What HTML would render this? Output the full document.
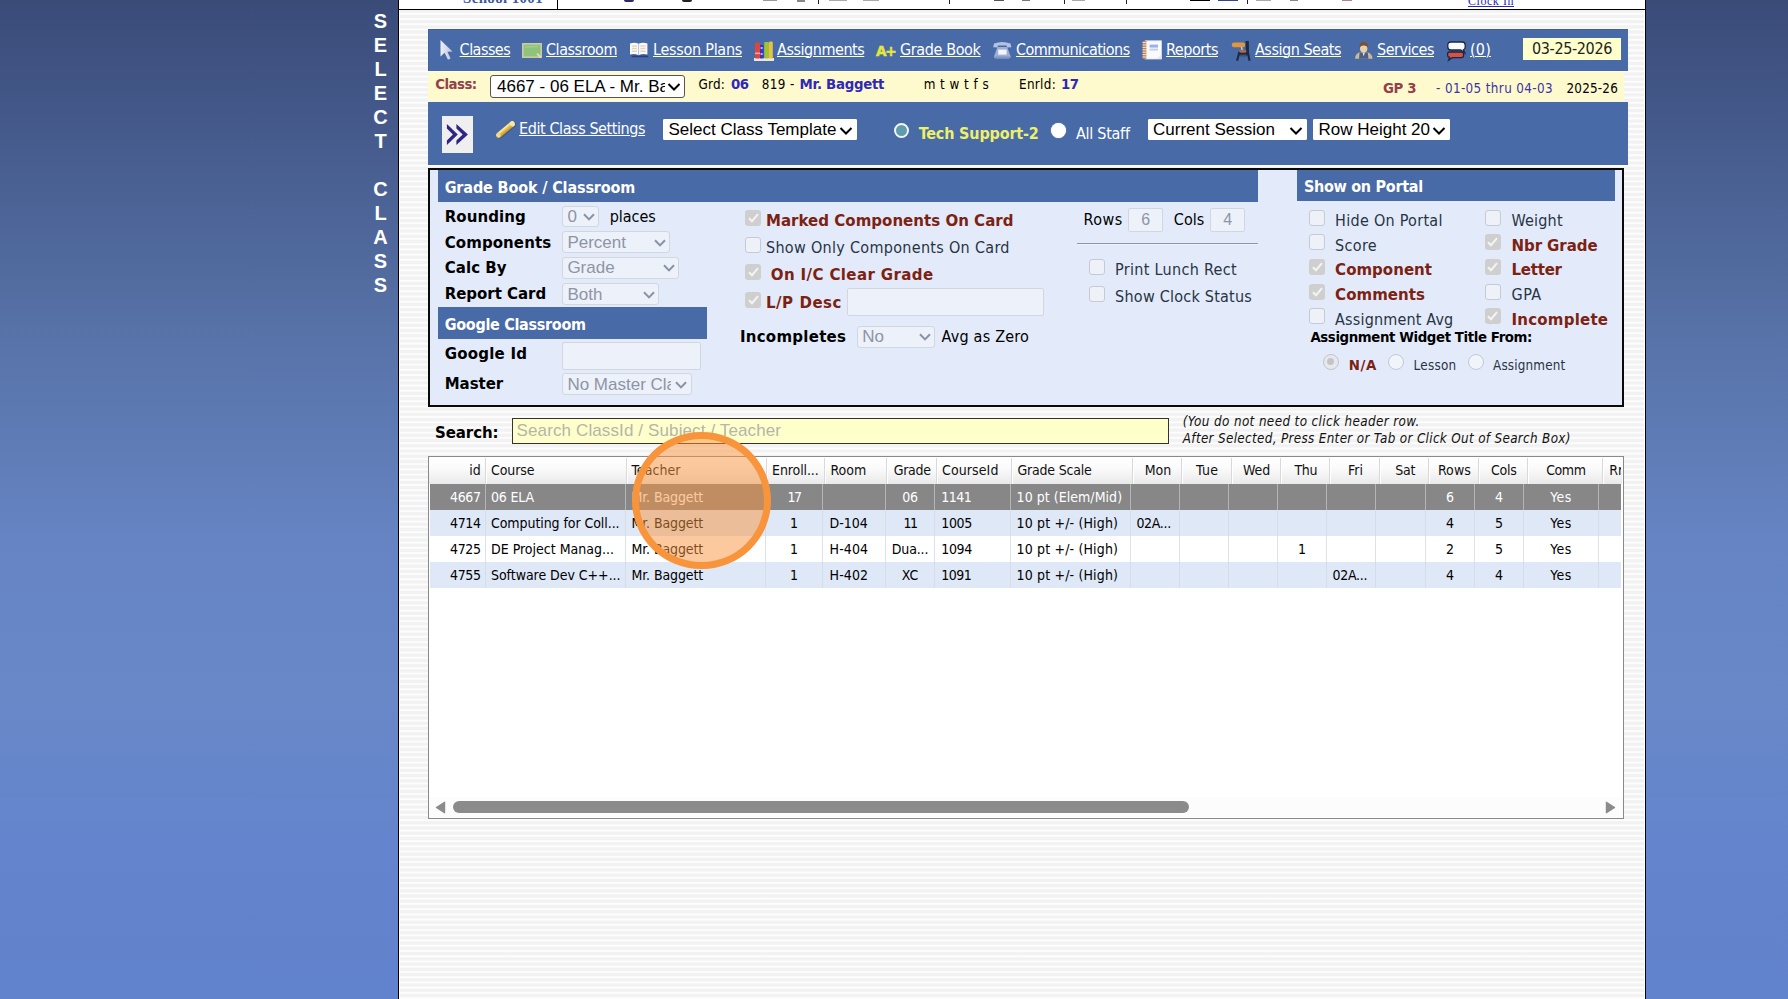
<!DOCTYPE html>
<html lang="en"><head><meta charset="utf-8"><title>Grade Book - Select Class</title>
<style>
html,body{margin:0;padding:0}
body{width:1788px;height:999px;overflow:hidden;position:relative;
 background:linear-gradient(180deg,#3a4b78 0px,#44598a 120px,#5772a7 330px,#6684c3 540px,#6888c8 700px,#6484cd 840px,#6182cc 999px);
 font-family:"DejaVu Sans Condensed","DejaVu Sans","Liberation Sans",sans-serif;font-size:16px;color:#000}
.a{position:absolute;box-sizing:border-box}
.t{position:absolute;white-space:nowrap;line-height:1}
.fc,.fcb{font-family:"DejaVu Sans Condensed","DejaVu Sans","Liberation Sans",sans-serif;font-stretch:condensed}
.fcb{font-weight:bold}
.fvb{font-family:"DejaVu Sans","Liberation Sans",sans-serif;font-weight:bold}
.fl,.flb{font-family:"Liberation Sans",sans-serif}
.flb{font-weight:bold}
.fs,.fsb{font-family:"Liberation Serif",serif}
.fsb{font-weight:bold}
svg{position:absolute;overflow:visible}
#main{left:398px;top:0;width:1248px;height:999px;border-left:1px solid #000;border-right:1px solid #02021a;box-shadow:inset 1px 0 0 #fff,inset -1px 0 0 #fff;
 background:repeating-linear-gradient(180deg,#f2f2f2 0px,#f2f2f2 1.8px,#fdfdfd 2.9px,#fdfdfd 3.7px,#f2f2f2 4.8px,#f2f2f2 5.236px)}
.sel{position:absolute;box-sizing:border-box;background:#fff;border:1px solid #767676;border-radius:3px}
.seld{position:absolute;box-sizing:border-box;background:#edf1f9;border:1px solid #d2d6df;border-radius:3px}
.cb{position:absolute;box-sizing:border-box;width:16px;height:16px;border:1px solid #c6cad4;border-radius:3px;background:#eff1f8}
.cbk{position:absolute;box-sizing:border-box;width:16px;height:16px;border-radius:3px;background:#cfcfcf}
.rd{position:absolute;box-sizing:border-box;width:16px;height:16px;border:1px solid #c4c8d2;border-radius:50%;background:#f1f4fb}
</style></head><body>
<div id="main" class="a"></div>
<div class="a" style="left:399px;top:0px;width:1246px;height:9px;background:#fff"></div>
<div class="a" style="left:399px;top:9px;width:1246px;height:1px;background:#000"></div>
<div class="a" style="left:557px;top:0px;width:1px;height:9px;background:#000"></div>
<span class="t fsb" style="top:-10px;line-height:16px;font-size:15px;color:#3c5a9a;letter-spacing:0.339px;left:463px;">School 1001</span>
<span class="t fs" style="top:-6px;line-height:14px;font-size:12px;color:#2a2ab0;letter-spacing:0.541px;text-decoration:underline;left:1468px;">Clock In</span>
<div class="a" style="left:818px;top:0px;width:1px;height:4px;background:#222"></div>
<div class="a" style="left:949px;top:0px;width:1px;height:4px;background:#222"></div>
<div class="a" style="left:1064px;top:0px;width:1px;height:4px;background:#222"></div>
<div class="a" style="left:1126px;top:0px;width:1px;height:4px;background:#222"></div>
<div class="a" style="left:1247px;top:0px;width:1px;height:4px;background:#222"></div>
<div class="a" style="left:624px;top:0px;width:10px;height:2px;background:#2b2b6b;border-radius:0 0 5px 5px"></div>
<div class="a" style="left:682px;top:0px;width:10px;height:2px;background:#222;border-radius:0 0 5px 5px"></div>
<div class="a" style="left:763px;top:0px;width:14px;height:1px;background:#999"></div>
<div class="a" style="left:797px;top:0px;width:8px;height:2px;background:#888"></div>
<div class="a" style="left:829px;top:0px;width:18px;height:1px;background:#aaa"></div>
<div class="a" style="left:863px;top:0px;width:16px;height:1px;background:#aaa"></div>
<div class="a" style="left:994px;top:0px;width:10px;height:1px;background:#555"></div>
<div class="a" style="left:1022px;top:0px;width:8px;height:1px;background:#777"></div>
<div class="a" style="left:1072px;top:0px;width:13px;height:1px;background:#aaa"></div>
<div class="a" style="left:1190px;top:0px;width:20px;height:1px;background:#000"></div>
<div class="a" style="left:1218px;top:0px;width:20px;height:1px;background:#334488"></div>
<div class="a" style="left:1256px;top:0px;width:15px;height:1px;background:#aaa"></div>
<div class="a" style="left:1290px;top:0px;width:8px;height:1px;background:#888"></div>
<div class="a" style="left:1342px;top:0px;width:10px;height:1px;background:#a88"></div>
<div class="a flb" style="left:370.5px;top:8.6px;width:20px;line-height:24px;font-size:20px;color:#fff;text-align:center;word-break:break-all">SELECT<br><br>CLASS</div>
<div class="a" style="left:428px;top:29px;width:1200px;height:42px;background:#486aa6;border-top:1px solid #44608f;border-left:1px solid #466499"></div>
<span class="t fc" style="top:39.8px;line-height:19px;font-size:16px;color:#fff;letter-spacing:-0.519px;text-decoration:underline;left:459.6px;text-decoration-thickness:1px;text-underline-offset:1px;">Classes</span>
<span class="t fc" style="top:39.8px;line-height:19px;font-size:16px;color:#fff;letter-spacing:-0.453px;text-decoration:underline;left:546px;text-decoration-thickness:1px;text-underline-offset:1px;">Classroom</span>
<span class="t fc" style="top:39.8px;line-height:19px;font-size:16px;color:#fff;letter-spacing:-0.268px;text-decoration:underline;left:653px;text-decoration-thickness:1px;text-underline-offset:1px;">Lesson Plans</span>
<span class="t fc" style="top:39.8px;line-height:19px;font-size:16px;color:#fff;letter-spacing:-0.451px;text-decoration:underline;left:777px;text-decoration-thickness:1px;text-underline-offset:1px;">Assignments</span>
<span class="t fc" style="top:39.8px;line-height:19px;font-size:16px;color:#fff;letter-spacing:-0.378px;text-decoration:underline;left:900px;text-decoration-thickness:1px;text-underline-offset:1px;">Grade Book</span>
<span class="t fc" style="top:39.8px;line-height:19px;font-size:16px;color:#fff;letter-spacing:-0.519px;text-decoration:underline;left:1016px;text-decoration-thickness:1px;text-underline-offset:1px;">Communications</span>
<span class="t fc" style="top:39.8px;line-height:19px;font-size:16px;color:#fff;letter-spacing:-0.449px;text-decoration:underline;left:1166px;text-decoration-thickness:1px;text-underline-offset:1px;">Reports</span>
<span class="t fc" style="top:39.8px;line-height:19px;font-size:16px;color:#fff;letter-spacing:-0.470px;text-decoration:underline;left:1255px;text-decoration-thickness:1px;text-underline-offset:1px;">Assign Seats</span>
<span class="t fc" style="top:39.8px;line-height:19px;font-size:16px;color:#fff;letter-spacing:-0.463px;text-decoration:underline;left:1377px;text-decoration-thickness:1px;text-underline-offset:1px;">Services</span>
<span class="t fc" style="top:39.8px;line-height:19px;font-size:16px;color:#fff;letter-spacing:0.203px;text-decoration:underline;left:1470px;text-decoration-thickness:1px;text-underline-offset:1px;">(0)</span>
<div class="a" style="left:1523px;top:38px;width:98px;height:22px;background:#ffffcc"></div>
<span class="t fc" style="top:39.3px;line-height:19px;font-size:16px;color:#222;letter-spacing:-0.364px;left:1532px;">03-25-2026</span>
<svg style="left:439px;top:39px" width="16" height="22" viewBox="0 0 16 22"><path d="M1.5 1 L1.5 17.5 L5.6 13.8 L9 20.8 L11.6 19.6 L8.4 12.8 L13.5 12.6 Z" fill="url(#cg)" opacity=".95"/><defs><linearGradient id="cg" x1="0" x2="1" y1="0" y2="0"><stop offset="0" stop-color="#f4f5fb"/><stop offset="1" stop-color="#c3cbe2"/></linearGradient></defs></svg>
<svg style="left:521.8px;top:42.8px" width="20" height="15" viewBox="0 0 20 15"><rect x=".8" y=".8" width="18.4" height="13.4" fill="#8fc37a" stroke="#d3cca6" stroke-width="1.5"/><path d="M15 10.6 L19 14.6" stroke="#e8dcc0" stroke-width="1.6"/><path d="M3 4 L16 3.4" stroke="#a0cf88" stroke-width="1.5"/></svg>
<svg style="left:629px;top:42px" width="20" height="16" viewBox="0 0 20 16"><path d="M2 13.4 L18.5 13.4 L19.5 15.2 L3.2 15.2 Z" fill="#2b3f78"/><path d="M1 1.6 Q5.5 0 9.6 1.8 Q13.8 0 18.4 1.6 L18.4 12.6 Q13.8 11.4 9.6 13.2 Q5.5 11.4 1 12.6 Z" fill="#fbfbfd"/><path d="M9.6 1.8 L9.6 13" stroke="#b9bfd2" stroke-width="1"/><path d="M2.8 4 H8 M2.8 6.6 H8 M2.8 9.2 H8 M11.3 4 H16.6 M11.3 6.6 H16.6 M11.3 9.2 H16.6" stroke="#e3d6bd" stroke-width="1.5"/></svg>
<svg style="left:753px;top:40px" width="22" height="22" viewBox="0 0 22 22"><rect x="1" y="18" width="20" height="3" fill="#e9e6dc"/><rect x="2" y="2.5" width="5" height="16" rx="1" fill="#d9473f"/><rect x="7" y="5" width="3.6" height="13.5" fill="#3a35c8"/><rect x="11.2" y="2" width="4.8" height="16.5" rx="1" fill="#9cc52f"/><rect x="16" y="1.5" width="3.8" height="17" rx="1" fill="#e6c04a"/><rect x="2" y="12.5" width="5" height="1.6" fill="#f0a8a0"/><rect x="7.6" y="7" width="2" height="2" fill="#b9b6ff"/><rect x="7.6" y="13" width="2" height="2" fill="#f0a0c0"/></svg>
<svg style="left:991.5px;top:40.8px" width="21" height="19" viewBox="0 0 21 19"><path d="M2 2.6 Q10 -0.4 18.5 2.6 L19.4 6.2 L15.2 6.6 L14.6 4.6 L6 4.6 L5.4 6.6 L1.2 6.2 Z" fill="#b4c2e2"/><path d="M5.4 6 L15.2 6 L18.6 15.6 Q18.8 17.6 16.8 17.6 L3.8 17.6 Q1.8 17.6 2 15.6 Z" fill="#9fb0d6"/><rect x="6.2" y="8.6" width="8.4" height="5" fill="#f4f6fc"/><path d="M2.4 16.2 H18.2" stroke="#8094c2" stroke-width="1.4"/></svg>
<svg style="left:1141.5px;top:40px" width="21" height="20" viewBox="0 0 21 20"><rect x="3.2" y=".8" width="16.2" height="18.2" fill="#fbfbfd" stroke="#dfe2ea" stroke-width=".8"/><rect x=".8" y="1" width="3.6" height="17.8" fill="#c9844e"/><path d="M.4 2.6 H5 M.4 5 H5 M.4 7.4 H5 M.4 9.8 H5 M.4 12.2 H5 M.4 14.6 H5 M.4 17 H5" stroke="#f1e4d4" stroke-width="1"/><rect x="7.6" y="4.6" width="8.4" height="3" fill="#9db2e4"/><rect x="7.6" y="8.6" width="8.4" height="2" fill="#c3cff0"/><path d="M15 19 L19.4 14.6 L19.4 19 Z" fill="#e4e6ee"/></svg>
<svg style="left:1230.5px;top:39.5px" width="21" height="22" viewBox="0 0 21 22"><path d="M14.6 1 L17.8 1 L18 12.4 L19.6 20.8 L17.4 20.8 L16.4 15.6 L8.6 15.6 L7.2 20.8 L5 20.8 L7.4 11.4 L14.8 11.4 Z" fill="#1d2a47"/><rect x=".8" y="2.6" width="13.4" height="4.6" rx="2.2" fill="#e2973c"/><path d="M10.4 7 L11.6 11.6" stroke="#cfd3dc" stroke-width="1.4"/><ellipse cx="11.8" cy="11.2" rx="3.6" ry="1.5" fill="#b86a3a"/><rect x="9.4" y="14.4" width="5.6" height="2.2" fill="#3c4f78"/></svg>
<svg style="left:1353.5px;top:40.5px" width="20" height="19" viewBox="0 0 20 19"><path d="M1 17.8 Q1.4 12.2 6 11.2 L13.4 11.2 Q18 12.2 18.6 17.8 Z" fill="#c9b995"/><path d="M5 17.8 L5.6 11.6 L13.8 11.6 L14.4 17.8 Z" fill="#4d5f86"/><path d="M8.6 11.6 L9.7 15.6 L10.8 11.6 Z" fill="#e8ecf4"/><ellipse cx="9.7" cy="7.6" rx="3.7" ry="3.9" fill="#ebcfa6"/><path d="M5.4 6.8 Q5 1.2 9.7 1 Q14.4 1.2 14 6.8 Q12.6 4.2 9.7 4.4 Q6.8 4.2 5.4 6.8 Z" fill="#7a5230"/></svg>
<svg style="left:1445.5px;top:39.5px" width="21" height="21" viewBox="0 0 21 21"><path d="M3.6 12 L15.4 12 Q17.6 12 17.6 14 L17.6 15.6 Q17.6 17.6 15.4 17.6 L6.4 17.6 L2.6 20.2 L3.6 17.4 Q1.6 17 1.6 15.4 L1.6 14 Q1.6 12 3.6 12 Z" fill="#d8523f" stroke="#1b2748" stroke-width="1.3"/><path d="M5 2 L16 2 Q19.2 2 19.2 5 L19.2 7 Q19.2 9.4 17.4 9.8 L18.8 12.8 L14.6 10 L5 10 Q1.8 10 1.8 7 L1.8 5 Q1.8 2 5 2 Z" fill="#fbfbfd" stroke="#1b2748" stroke-width="1.3"/></svg>
<span class="t fvb" style="top:43px;line-height:16px;font-size:13.6px;color:#e6e63c;letter-spacing:-1.261px;left:876px;-webkit-text-stroke:0.5px #e6e63c;">A+</span>
<div class="a" style="left:428px;top:71px;width:1196px;height:31px;background:#fffacd;border-top:1px solid #fbfbf0;border-bottom:1px solid #eef6ee"></div>
<span class="t fvb" style="top:77px;line-height:15px;font-size:13.33px;color:#93404c;letter-spacing:-0.508px;left:435.2px;">Class:</span>
<div class="sel" style="left:490px;top:75px;width:195px;height:23px;border-color:#555"></div>
<span class="t fl" style="top:77px;line-height:19px;font-size:17px;color:#000;left:497px;width:167.5px;overflow:hidden;">4667 - 06 ELA - Mr. Baggett</span>
<svg style="left:667px;top:82px" width="14" height="10" viewBox="0 0 14 10"><path d="M1.5 2 L7 7.5 L12.5 2" fill="none" stroke="#000" stroke-width="2"/></svg>
<span class="t fc" style="top:77px;line-height:15px;font-size:13.33px;color:#000;letter-spacing:0.211px;left:698.5px;">Grd:</span>
<span class="t fvb" style="top:77px;line-height:15px;font-size:13.33px;color:#3028b8;letter-spacing:-0.531px;left:731px;">06</span>
<span class="t fc" style="top:77px;line-height:15px;font-size:13.33px;color:#000;letter-spacing:0.394px;left:761.8px;">819 -</span>
<span class="t fvb" style="top:77px;line-height:15px;font-size:13.33px;color:#3028b8;letter-spacing:-0.287px;left:799.6px;">Mr. Baggett</span>
<span class="t fc" style="top:77px;line-height:15px;font-size:13.33px;color:#000;letter-spacing:0.464px;left:923.7px;">m t w t f s</span>
<span class="t fc" style="top:77px;line-height:15px;font-size:13.33px;color:#000;letter-spacing:0.318px;left:1019px;">Enrld:</span>
<span class="t fvb" style="top:77px;line-height:15px;font-size:13.33px;color:#3028b8;letter-spacing:-0.531px;left:1061px;">17</span>
<span class="t fvb" style="top:81px;line-height:15px;font-size:13.33px;color:#93404c;letter-spacing:-0.406px;left:1383px;">GP 3</span>
<span class="t fc" style="top:81px;line-height:15px;font-size:13.33px;color:#3a35a8;letter-spacing:0.375px;left:1436px;">- 01-05 thru 04-03</span>
<span class="t fc" style="top:81px;line-height:15px;font-size:13.33px;color:#000;letter-spacing:0.201px;left:1566.5px;">2025-26</span>
<div class="a" style="left:428px;top:102px;width:1200px;height:62.5px;background:#486aa6"></div>
<div class="a" style="left:442px;top:116px;width:31px;height:37px;background:#efefef"></div>
<svg style="left:442px;top:116px" width="31" height="37" viewBox="0 0 31 37"><path d="M4.9 8 L15.8 18.4 L4.9 29 L4.9 24.4 L10.9 18.4 L4.9 12.5 Z M14.4 8 L25.9 18.4 L14.4 29 L14.4 24.4 L20.7 18.4 L14.4 12.5 Z" fill="#2e2585"/></svg>
<svg style="left:493px;top:117px" width="26" height="26" viewBox="0 0 26 26"><defs><linearGradient id="pg" x1="0" x2="0" y1="0" y2="1"><stop offset="0" stop-color="#f6e08a"/><stop offset=".45" stop-color="#e9c652"/><stop offset="1" stop-color="#b98f34"/></linearGradient></defs><g transform="rotate(-40 12.3 12.5)"><rect x="1" y="9.9" width="22.8" height="5.6" rx="2.8" fill="#2c3860" opacity=".4" transform="translate(.4 1.1)"/><rect x="1" y="9.9" width="22.8" height="5.6" rx="2.8" fill="url(#pg)"/><rect x="19" y="9.9" width="4.8" height="5.6" rx="2.6" fill="#f4e6b0"/><ellipse cx="3.4" cy="12.7" rx="1.9" ry="2.2" fill="#f0d890"/><path d="M5 11 H18.6" stroke="#fbf0b8" stroke-width="1" opacity=".9"/></g></svg>
<span class="t fc" style="top:119px;line-height:19px;font-size:16px;color:#fff;letter-spacing:-0.418px;text-decoration:underline;left:519.1px;text-decoration-thickness:1px;text-underline-offset:1px;">Edit Class Settings</span>
<div class="sel" style="left:663px;top:119px;width:194.4px;height:21px;border-color:#fff;border-radius:1px"></div>
<span class="t fl" style="top:120.3px;line-height:19px;font-size:17px;color:#000;left:668.5px;">Select Class Template</span>
<svg style="left:839px;top:126px" width="14" height="10" viewBox="0 0 14 10"><path d="M1.5 2 L7 7.5 L12.5 2" fill="none" stroke="#000" stroke-width="2"/></svg>
<div class="a" style="left:893.5px;top:123px;width:15px;height:15px;border-radius:50%;border:2.2px solid #f2f6f8;background:#5f9dac"></div>
<span class="t fcb" style="top:123.6px;line-height:19px;font-size:16px;color:#eef06a;letter-spacing:-0.167px;left:918.7px;">Tech Support-2</span>
<div class="a" style="left:1050.5px;top:122.5px;width:15px;height:15px;border-radius:50%;background:#fff;box-shadow:0 0 1px #dde"></div>
<span class="t fc" style="top:123.6px;line-height:19px;font-size:16px;color:#fff;letter-spacing:-0.271px;left:1076px;">All Staff</span>
<div class="sel" style="left:1148px;top:119px;width:159.4px;height:21px;border-color:#fff;border-radius:1px"></div>
<span class="t fl" style="top:120.3px;line-height:19px;font-size:17px;color:#000;left:1153px;">Current Session</span>
<svg style="left:1289px;top:126px" width="14" height="10" viewBox="0 0 14 10"><path d="M1.5 2 L7 7.5 L12.5 2" fill="none" stroke="#000" stroke-width="2"/></svg>
<div class="sel" style="left:1313.4px;top:119px;width:137px;height:21px;border-color:#fff;border-radius:1px"></div>
<span class="t fl" style="top:120.3px;line-height:19px;font-size:17px;color:#000;left:1318.5px;">Row Height 20</span>
<svg style="left:1432px;top:126px" width="14" height="10" viewBox="0 0 14 10"><path d="M1.5 2 L7 7.5 L12.5 2" fill="none" stroke="#000" stroke-width="2"/></svg>
<div class="a" style="left:428px;top:168px;width:1196px;height:239px;background:#e3ebfa;border:2px solid #0a0a0a"></div>
<div class="a" style="left:438px;top:170px;width:820px;height:32px;background:#486aa6"></div>
<span class="t fcb" style="top:178.4px;line-height:19px;font-size:16px;color:#fff;letter-spacing:-0.138px;left:444.7px;">Grade Book / Classroom</span>
<div class="a" style="left:1297px;top:170px;width:318px;height:31px;background:#486aa6"></div>
<span class="t fcb" style="top:177.4px;line-height:19px;font-size:16px;color:#fff;letter-spacing:-0.288px;left:1303.9px;">Show on Portal</span>
<div class="a" style="left:438px;top:307px;width:269px;height:32px;background:#486aa6"></div>
<span class="t fcb" style="top:314.8px;line-height:19px;font-size:16px;color:#fff;letter-spacing:-0.302px;left:444.7px;">Google Classroom</span>
<span class="t fvb" style="top:207.8px;line-height:18px;font-size:15px;color:#000;letter-spacing:0.061px;left:444.7px;">Rounding</span>
<div class="seld" style="left:562.4px;top:205.6px;width:36.6px;height:21.6px"></div>
<span class="t fl" style="top:207.2px;line-height:19px;font-size:17px;color:#8d95a6;left:567.4px;">0</span>
<svg style="left:582.7px;top:213.2px" width="12" height="8" viewBox="0 0 12 8"><path d="M1 1.2 L6 6.4 L11 1.2" fill="none" stroke="#8a93a6" stroke-width="2"/></svg>
<span class="t fc" style="top:206.8px;line-height:19px;font-size:16px;color:#000;letter-spacing:-0.039px;left:609.7px;">places</span>
<span class="t fvb" style="top:234px;line-height:18px;font-size:15px;color:#000;letter-spacing:0.087px;left:444.7px;">Components</span>
<div class="seld" style="left:562.4px;top:231.4px;width:107.4px;height:22px"></div>
<span class="t fl" style="top:233px;line-height:19px;font-size:17px;color:#8d95a6;left:567.4px;">Percent</span>
<svg style="left:653.5px;top:239.0px" width="12" height="8" viewBox="0 0 12 8"><path d="M1 1.2 L6 6.4 L11 1.2" fill="none" stroke="#8a93a6" stroke-width="2"/></svg>
<span class="t fvb" style="top:258.7px;line-height:18px;font-size:15px;color:#000;letter-spacing:0.056px;left:444.7px;">Calc By</span>
<div class="seld" style="left:562.4px;top:256.7px;width:116.6px;height:22px"></div>
<span class="t fl" style="top:258.3px;line-height:19px;font-size:17px;color:#8d95a6;left:567.4px;">Grade</span>
<svg style="left:662.7px;top:264.3px" width="12" height="8" viewBox="0 0 12 8"><path d="M1 1.2 L6 6.4 L11 1.2" fill="none" stroke="#8a93a6" stroke-width="2"/></svg>
<span class="t fvb" style="top:284.9px;line-height:18px;font-size:15px;color:#000;letter-spacing:-0.030px;left:444.7px;">Report Card</span>
<div class="seld" style="left:562.4px;top:283px;width:96.6px;height:22px"></div>
<span class="t fl" style="top:284.6px;line-height:19px;font-size:17px;color:#8d95a6;left:567.4px;">Both</span>
<svg style="left:642.7px;top:290.6px" width="12" height="8" viewBox="0 0 12 8"><path d="M1 1.2 L6 6.4 L11 1.2" fill="none" stroke="#8a93a6" stroke-width="2"/></svg>
<span class="t fvb" style="top:344.5px;line-height:18px;font-size:15px;color:#000;letter-spacing:0.220px;left:444.7px;">Google Id</span>
<div class="seld" style="left:562.4px;top:342.4px;width:138.4px;height:27.4px;border-radius:2px"></div>
<span class="t fvb" style="top:375px;line-height:18px;font-size:15px;color:#000;letter-spacing:-0.036px;left:444.7px;">Master</span>
<div class="seld" style="left:562.4px;top:373px;width:129.2px;height:22px"></div>
<span class="t fl" style="top:374.6px;line-height:19px;font-size:17px;color:#8d95a6;left:567.4px;width:104px;overflow:hidden;">No Master Class</span>
<svg style="left:675.3px;top:380.6px" width="12" height="8" viewBox="0 0 12 8"><path d="M1 1.2 L6 6.4 L11 1.2" fill="none" stroke="#8a93a6" stroke-width="2"/></svg>
<div class="cbk" style="left:745.3px;top:210px"><svg style="left:2.5px;top:3px" width="11" height="10" viewBox="0 0 11 10"><path d="M1 5.2 L4 8.2 L10 1.2" fill="none" stroke="#f4f4f4" stroke-width="2"/></svg></div>
<span class="t fvb" style="top:212.2px;line-height:18px;font-size:15px;color:#7c2212;letter-spacing:0.023px;left:766px;">Marked Components On Card</span>
<div class="cb" style="left:745.3px;top:237px"></div>
<span class="t fc" style="top:238px;line-height:19px;font-size:16px;color:#283444;letter-spacing:0.304px;left:766px;">Show Only Components On Card</span>
<div class="cbk" style="left:745.3px;top:264.3px"><svg style="left:2.5px;top:3px" width="11" height="10" viewBox="0 0 11 10"><path d="M1 5.2 L4 8.2 L10 1.2" fill="none" stroke="#f4f4f4" stroke-width="2"/></svg></div>
<span class="t fvb" style="top:266px;line-height:18px;font-size:15px;color:#7c2212;letter-spacing:0.386px;left:770.8px;">On I/C Clear Grade</span>
<div class="cbk" style="left:745.3px;top:292px"><svg style="left:2.5px;top:3px" width="11" height="10" viewBox="0 0 11 10"><path d="M1 5.2 L4 8.2 L10 1.2" fill="none" stroke="#f4f4f4" stroke-width="2"/></svg></div>
<span class="t fvb" style="top:294px;line-height:18px;font-size:15px;color:#7c2212;letter-spacing:0.537px;left:766px;">L/P Desc</span>
<div class="seld" style="left:847px;top:288.3px;width:197px;height:27.3px;border-radius:2px"></div>
<span class="t fvb" style="top:327.8px;line-height:18px;font-size:15px;color:#000;letter-spacing:0.262px;left:739.9px;">Incompletes</span>
<div class="seld" style="left:857.3px;top:325.8px;width:78.2px;height:22px"></div>
<span class="t fl" style="top:327.4px;line-height:19px;font-size:17px;color:#8d95a6;left:862.3px;">No</span>
<svg style="left:919.2px;top:333.40000000000003px" width="12" height="8" viewBox="0 0 12 8"><path d="M1 1.2 L6 6.4 L11 1.2" fill="none" stroke="#8a93a6" stroke-width="2"/></svg>
<span class="t fc" style="top:326.8px;line-height:19px;font-size:16px;color:#000;letter-spacing:0.217px;left:941.6px;">Avg as Zero</span>
<span class="t fc" style="top:209.9px;line-height:19px;font-size:16px;color:#000;letter-spacing:0.510px;left:1083.4px;">Rows</span>
<div class="seld" style="left:1128.4px;top:208.4px;width:34.6px;height:23.2px;border-radius:2px"></div>
<span class="t fl" style="top:211.3px;line-height:17px;font-size:16px;color:#8d95a6;left:845.7px;width:600px;text-align:center;">6</span>
<span class="t fc" style="top:209.9px;line-height:19px;font-size:16px;color:#000;letter-spacing:0.060px;left:1173.8px;">Cols</span>
<div class="seld" style="left:1210.2px;top:208.4px;width:34.8px;height:23.2px;border-radius:2px"></div>
<span class="t fl" style="top:211.3px;line-height:17px;font-size:16px;color:#8d95a6;left:927.6px;width:600px;text-align:center;">4</span>
<div class="a" style="left:1077px;top:243px;width:181px;height:2px;border-top:1px solid #92969e;border-bottom:1px solid #eef2fb"></div>
<div class="cb" style="left:1089.2px;top:259px"></div>
<span class="t fc" style="top:260.1px;line-height:19px;font-size:16px;color:#283444;letter-spacing:0.304px;left:1115.1px;">Print Lunch Rect</span>
<div class="cb" style="left:1089.2px;top:286px"></div>
<span class="t fc" style="top:287px;line-height:19px;font-size:16px;color:#283444;letter-spacing:0.237px;left:1115.1px;">Show Clock Status</span>
<div class="cb" style="left:1309.1px;top:209.7px"></div>
<span class="t fc" style="top:211.2px;line-height:19px;font-size:16px;color:#283444;letter-spacing:0.277px;left:1335.1px;">Hide On Portal</span>
<div class="cb" style="left:1309.1px;top:234.3px"></div>
<span class="t fc" style="top:235.8px;line-height:19px;font-size:16px;color:#283444;letter-spacing:0.324px;left:1335.1px;">Score</span>
<div class="cbk" style="left:1309.1px;top:258.6px"><svg style="left:2.5px;top:3px" width="11" height="10" viewBox="0 0 11 10"><path d="M1 5.2 L4 8.2 L10 1.2" fill="none" stroke="#f4f4f4" stroke-width="2"/></svg></div>
<span class="t fvb" style="top:261.1px;line-height:18px;font-size:15px;color:#7c2212;letter-spacing:0.024px;left:1335.1px;">Component</span>
<div class="cbk" style="left:1309.1px;top:283.6px"><svg style="left:2.5px;top:3px" width="11" height="10" viewBox="0 0 11 10"><path d="M1 5.2 L4 8.2 L10 1.2" fill="none" stroke="#f4f4f4" stroke-width="2"/></svg></div>
<span class="t fvb" style="top:286.1px;line-height:18px;font-size:15px;color:#7c2212;letter-spacing:0.034px;left:1335.1px;">Comments</span>
<div class="cb" style="left:1309.1px;top:308.3px"></div>
<span class="t fc" style="top:309.8px;line-height:19px;font-size:16px;color:#283444;letter-spacing:0.172px;left:1335.1px;">Assignment Avg</span>
<div class="cb" style="left:1484.9px;top:209.7px"></div>
<span class="t fc" style="top:211.2px;line-height:19px;font-size:16px;color:#283444;letter-spacing:0.206px;left:1511.5px;">Weight</span>
<div class="cbk" style="left:1484.9px;top:234.3px"><svg style="left:2.5px;top:3px" width="11" height="10" viewBox="0 0 11 10"><path d="M1 5.2 L4 8.2 L10 1.2" fill="none" stroke="#f4f4f4" stroke-width="2"/></svg></div>
<span class="t fvb" style="top:236.8px;line-height:18px;font-size:15px;color:#7c2212;letter-spacing:-0.073px;left:1511.5px;">Nbr Grade</span>
<div class="cbk" style="left:1484.9px;top:258.6px"><svg style="left:2.5px;top:3px" width="11" height="10" viewBox="0 0 11 10"><path d="M1 5.2 L4 8.2 L10 1.2" fill="none" stroke="#f4f4f4" stroke-width="2"/></svg></div>
<span class="t fvb" style="top:261.1px;line-height:18px;font-size:15px;color:#7c2212;letter-spacing:-0.226px;left:1511.5px;">Letter</span>
<div class="cb" style="left:1484.9px;top:283.6px"></div>
<span class="t fc" style="top:285.1px;line-height:19px;font-size:16px;color:#283444;letter-spacing:0.515px;left:1511.5px;">GPA</span>
<div class="cbk" style="left:1484.9px;top:308.3px"><svg style="left:2.5px;top:3px" width="11" height="10" viewBox="0 0 11 10"><path d="M1 5.2 L4 8.2 L10 1.2" fill="none" stroke="#f4f4f4" stroke-width="2"/></svg></div>
<span class="t fvb" style="top:310.8px;line-height:18px;font-size:15px;color:#7c2212;letter-spacing:0.222px;left:1511.5px;">Incomplete</span>
<span class="t fvb" style="top:329.6px;line-height:15px;font-size:13.33px;color:#000;letter-spacing:-0.396px;left:1310.4px;">Assignment Widget Title From:</span>
<div class="rd" style="left:1322.8px;top:353.8px;background:#e6e8ee;border-color:#c2c4ca"><div class="a" style="left:3.5px;top:3.5px;width:7px;height:7px;border-radius:50%;background:#c4c4c8"></div></div>
<span class="t fvb" style="top:357.5px;line-height:15px;font-size:13.33px;color:#7c2212;letter-spacing:0.652px;left:1348.7px;">N/A</span>
<div class="rd" style="left:1388px;top:353.8px"></div>
<span class="t fc" style="top:357.5px;line-height:15px;font-size:13.33px;color:#283444;letter-spacing:0.256px;left:1413.6px;">Lesson</span>
<div class="rd" style="left:1467.8px;top:353.8px"></div>
<span class="t fc" style="top:357.5px;line-height:15px;font-size:13.33px;color:#283444;letter-spacing:0.179px;left:1493px;">Assignment</span>
<span class="t fvb" style="top:423.5px;line-height:18px;font-size:15px;color:#000;letter-spacing:-0.083px;left:435px;">Search:</span>
<div class="a" style="left:512px;top:418px;width:657px;height:26px;background:#ffffcc;border:1px solid #333"></div>
<span class="t fl" style="top:420.8px;line-height:19px;font-size:17px;color:#b5b5a8;letter-spacing:0.118px;left:516.6px;">Search ClassId / Subject / Teacher</span>
<span class="t fc" style="top:413.6px;line-height:15px;font-size:13.33px;color:#111;letter-spacing:0.384px;left:1182.8px;font-style:italic;">(You do not need to click header row.</span>
<span class="t fc" style="top:430.6px;line-height:15px;font-size:13.33px;color:#111;letter-spacing:0.332px;left:1182.8px;font-style:italic;">After Selected, Press Enter or Tab or Click Out of Search Box)</span>
<div class="a" style="left:428px;top:456px;width:1196px;height:363px;background:#fff;border:1px solid #8a8a8a"></div>
<div class="a" style="left:429px;top:457px;width:1193px;height:27px;background:linear-gradient(180deg,#ffffff 0%,#fbfbfb 40%,#f1f1f1 75%,#e9e9e9 100%)"></div>
<div class="a" style="left:430px;top:484px;width:1191px;height:26px;background:#878787"></div>
<div class="a" style="left:430px;top:510px;width:1191px;height:26px;background:#dfe8f7"></div>
<div class="a" style="left:430px;top:536px;width:1191px;height:26px;background:#ffffff"></div>
<div class="a" style="left:430px;top:562px;width:1191px;height:26px;background:#dfe8f7"></div>
<div class="a" style="left:485px;top:458px;width:1px;height:26px;background:#d9d9d9"></div>
<div class="a" style="left:486px;top:458px;width:1px;height:26px;background:#fff"></div>
<div class="a" style="left:626px;top:458px;width:1px;height:26px;background:#d9d9d9"></div>
<div class="a" style="left:627px;top:458px;width:1px;height:26px;background:#fff"></div>
<div class="a" style="left:766px;top:458px;width:1px;height:26px;background:#d9d9d9"></div>
<div class="a" style="left:767px;top:458px;width:1px;height:26px;background:#fff"></div>
<div class="a" style="left:824px;top:458px;width:1px;height:26px;background:#d9d9d9"></div>
<div class="a" style="left:825px;top:458px;width:1px;height:26px;background:#fff"></div>
<div class="a" style="left:886px;top:458px;width:1px;height:26px;background:#d9d9d9"></div>
<div class="a" style="left:887px;top:458px;width:1px;height:26px;background:#fff"></div>
<div class="a" style="left:936px;top:458px;width:1px;height:26px;background:#d9d9d9"></div>
<div class="a" style="left:937px;top:458px;width:1px;height:26px;background:#fff"></div>
<div class="a" style="left:1011px;top:458px;width:1px;height:26px;background:#d9d9d9"></div>
<div class="a" style="left:1012px;top:458px;width:1px;height:26px;background:#fff"></div>
<div class="a" style="left:1132px;top:458px;width:1px;height:26px;background:#d9d9d9"></div>
<div class="a" style="left:1133px;top:458px;width:1px;height:26px;background:#fff"></div>
<div class="a" style="left:1181px;top:458px;width:1px;height:26px;background:#d9d9d9"></div>
<div class="a" style="left:1182px;top:458px;width:1px;height:26px;background:#fff"></div>
<div class="a" style="left:1231px;top:458px;width:1px;height:26px;background:#d9d9d9"></div>
<div class="a" style="left:1232px;top:458px;width:1px;height:26px;background:#fff"></div>
<div class="a" style="left:1280px;top:458px;width:1px;height:26px;background:#d9d9d9"></div>
<div class="a" style="left:1281px;top:458px;width:1px;height:26px;background:#fff"></div>
<div class="a" style="left:1329px;top:458px;width:1px;height:26px;background:#d9d9d9"></div>
<div class="a" style="left:1330px;top:458px;width:1px;height:26px;background:#fff"></div>
<div class="a" style="left:1379px;top:458px;width:1px;height:26px;background:#d9d9d9"></div>
<div class="a" style="left:1380px;top:458px;width:1px;height:26px;background:#fff"></div>
<div class="a" style="left:1428px;top:458px;width:1px;height:26px;background:#d9d9d9"></div>
<div class="a" style="left:1429px;top:458px;width:1px;height:26px;background:#fff"></div>
<div class="a" style="left:1478px;top:458px;width:1px;height:26px;background:#d9d9d9"></div>
<div class="a" style="left:1479px;top:458px;width:1px;height:26px;background:#fff"></div>
<div class="a" style="left:1527px;top:458px;width:1px;height:26px;background:#d9d9d9"></div>
<div class="a" style="left:1528px;top:458px;width:1px;height:26px;background:#fff"></div>
<div class="a" style="left:1602px;top:458px;width:1px;height:26px;background:#d9d9d9"></div>
<div class="a" style="left:1603px;top:458px;width:1px;height:26px;background:#fff"></div>
<div class="a" style="left:485px;top:484px;width:1px;height:26px;background:#b4b4b4"></div>
<div class="a" style="left:485px;top:510px;width:1px;height:78px;background:#d4d9e2;opacity:.8"></div>
<div class="a" style="left:625px;top:484px;width:1px;height:26px;background:#b4b4b4"></div>
<div class="a" style="left:625px;top:510px;width:1px;height:78px;background:#d4d9e2;opacity:.8"></div>
<div class="a" style="left:765px;top:484px;width:1px;height:26px;background:#b4b4b4"></div>
<div class="a" style="left:765px;top:510px;width:1px;height:78px;background:#d4d9e2;opacity:.8"></div>
<div class="a" style="left:822px;top:484px;width:1px;height:26px;background:#b4b4b4"></div>
<div class="a" style="left:822px;top:510px;width:1px;height:78px;background:#d4d9e2;opacity:.8"></div>
<div class="a" style="left:885px;top:484px;width:1px;height:26px;background:#b4b4b4"></div>
<div class="a" style="left:885px;top:510px;width:1px;height:78px;background:#d4d9e2;opacity:.8"></div>
<div class="a" style="left:934px;top:484px;width:1px;height:26px;background:#b4b4b4"></div>
<div class="a" style="left:934px;top:510px;width:1px;height:78px;background:#d4d9e2;opacity:.8"></div>
<div class="a" style="left:1010px;top:484px;width:1px;height:26px;background:#b4b4b4"></div>
<div class="a" style="left:1010px;top:510px;width:1px;height:78px;background:#d4d9e2;opacity:.8"></div>
<div class="a" style="left:1130px;top:484px;width:1px;height:26px;background:#b4b4b4"></div>
<div class="a" style="left:1130px;top:510px;width:1px;height:78px;background:#d4d9e2;opacity:.8"></div>
<div class="a" style="left:1179px;top:484px;width:1px;height:26px;background:#b4b4b4"></div>
<div class="a" style="left:1179px;top:510px;width:1px;height:78px;background:#d4d9e2;opacity:.8"></div>
<div class="a" style="left:1228px;top:484px;width:1px;height:26px;background:#b4b4b4"></div>
<div class="a" style="left:1228px;top:510px;width:1px;height:78px;background:#d4d9e2;opacity:.8"></div>
<div class="a" style="left:1277px;top:484px;width:1px;height:26px;background:#b4b4b4"></div>
<div class="a" style="left:1277px;top:510px;width:1px;height:78px;background:#d4d9e2;opacity:.8"></div>
<div class="a" style="left:1326px;top:484px;width:1px;height:26px;background:#b4b4b4"></div>
<div class="a" style="left:1326px;top:510px;width:1px;height:78px;background:#d4d9e2;opacity:.8"></div>
<div class="a" style="left:1375px;top:484px;width:1px;height:26px;background:#b4b4b4"></div>
<div class="a" style="left:1375px;top:510px;width:1px;height:78px;background:#d4d9e2;opacity:.8"></div>
<div class="a" style="left:1425px;top:484px;width:1px;height:26px;background:#b4b4b4"></div>
<div class="a" style="left:1425px;top:510px;width:1px;height:78px;background:#d4d9e2;opacity:.8"></div>
<div class="a" style="left:1474px;top:484px;width:1px;height:26px;background:#b4b4b4"></div>
<div class="a" style="left:1474px;top:510px;width:1px;height:78px;background:#d4d9e2;opacity:.8"></div>
<div class="a" style="left:1523px;top:484px;width:1px;height:26px;background:#b4b4b4"></div>
<div class="a" style="left:1523px;top:510px;width:1px;height:78px;background:#d4d9e2;opacity:.8"></div>
<div class="a" style="left:1598px;top:484px;width:1px;height:26px;background:#b4b4b4"></div>
<div class="a" style="left:1598px;top:510px;width:1px;height:78px;background:#d4d9e2;opacity:.8"></div>
<span class="t fc" style="top:462px;line-height:16px;font-size:14px;color:#111;left:-119.3px;width:600px;text-align:right;">id</span>
<span class="t fc" style="top:462px;line-height:16px;font-size:14px;color:#111;letter-spacing:-0.081px;left:491px;">Course</span>
<span class="t fc" style="top:462px;line-height:16px;font-size:14px;color:#111;letter-spacing:0.054px;left:631.5px;">Teacher</span>
<span class="t fc" style="top:462px;line-height:16px;font-size:14px;color:#111;letter-spacing:-0.113px;left:772.1px;">Enroll...</span>
<span class="t fc" style="top:462px;line-height:16px;font-size:14px;color:#111;letter-spacing:0.047px;left:830.4px;">Room</span>
<span class="t fc" style="top:462px;line-height:16px;font-size:14px;color:#111;letter-spacing:0.102px;left:942px;">CourseId</span>
<span class="t fc" style="top:462px;line-height:16px;font-size:14px;color:#111;letter-spacing:-0.209px;left:1017.5px;">Grade Scale</span>
<span class="t fc" style="top:462px;line-height:16px;font-size:14px;color:#111;letter-spacing:-0.281px;left:612.2px;width:600px;text-align:center;">Grade</span>
<span class="t fc" style="top:462px;line-height:16px;font-size:14px;color:#111;letter-spacing:0.013px;left:857.95px;width:600px;text-align:center;">Mon</span>
<span class="t fc" style="top:462px;line-height:16px;font-size:14px;color:#111;letter-spacing:0.263px;left:907.15px;width:600px;text-align:center;">Tue</span>
<span class="t fc" style="top:462px;line-height:16px;font-size:14px;color:#111;letter-spacing:-0.030px;left:956.65px;width:600px;text-align:center;">Wed</span>
<span class="t fc" style="top:462px;line-height:16px;font-size:14px;color:#111;letter-spacing:-0.224px;left:1005.9px;width:600px;text-align:center;">Thu</span>
<span class="t fc" style="top:462px;line-height:16px;font-size:14px;color:#111;letter-spacing:0.031px;left:1055.55px;width:600px;text-align:center;">Fri</span>
<span class="t fc" style="top:462px;line-height:16px;font-size:14px;color:#111;letter-spacing:-0.219px;left:1105.2px;width:600px;text-align:center;">Sat</span>
<span class="t fc" style="top:462px;line-height:16px;font-size:14px;color:#111;letter-spacing:0.099px;left:1154.45px;width:600px;text-align:center;">Rows</span>
<span class="t fc" style="top:462px;line-height:16px;font-size:14px;color:#111;letter-spacing:-0.245px;left:1203.8px;width:600px;text-align:center;">Cols</span>
<span class="t fc" style="top:462px;line-height:16px;font-size:14px;color:#111;letter-spacing:-0.387px;left:1265.9px;width:600px;text-align:center;">Comm</span>
<span class="t fc" style="top:462px;line-height:16px;font-size:14px;color:#111;left:1609.3px;width:11.5px;overflow:hidden;">Rr</span>
<span class="t fc" style="top:489.4px;line-height:16px;font-size:14px;color:#fff;letter-spacing:-0.337px;left:-119.3px;width:600px;text-align:right;">4667</span>
<span class="t fc" style="top:489.4px;line-height:16px;font-size:14px;color:#fff;letter-spacing:-0.156px;left:491px;">06 ELA</span>
<span class="t fc" style="top:489.4px;line-height:16px;font-size:14px;color:#fff;letter-spacing:-0.094px;left:631.5px;">Mr. Baggett</span>
<span class="t fc" style="top:489.4px;line-height:16px;font-size:14px;color:#fff;letter-spacing:-1.516px;left:494px;width:600px;text-align:center;">17</span>
<span class="t fc" style="top:489.4px;line-height:16px;font-size:14px;color:#fff;letter-spacing:-0.366px;left:610px;width:600px;text-align:center;">06</span>
<span class="t fc" style="top:489.4px;line-height:16px;font-size:14px;color:#fff;letter-spacing:-0.512px;left:941.3px;">1141</span>
<span class="t fc" style="top:489.4px;line-height:16px;font-size:14px;color:#fff;letter-spacing:0.038px;left:1016.6px;">10 pt (Elem/Mid)</span>
<span class="t fc" style="top:489.4px;line-height:16px;font-size:14px;color:#fff;left:1150px;width:600px;text-align:center;">6</span>
<span class="t fc" style="top:489.4px;line-height:16px;font-size:14px;color:#fff;left:1199px;width:600px;text-align:center;">4</span>
<span class="t fc" style="top:489.4px;line-height:16px;font-size:14px;color:#fff;letter-spacing:0.448px;left:1261px;width:600px;text-align:center;">Yes</span>
<span class="t fc" style="top:515.4px;line-height:16px;font-size:14px;color:#000;letter-spacing:-0.337px;left:-119.3px;width:600px;text-align:right;">4714</span>
<span class="t fc" style="top:515.4px;line-height:16px;font-size:14px;color:#000;letter-spacing:-0.071px;left:491px;">Computing for Coll...</span>
<span class="t fc" style="top:515.4px;line-height:16px;font-size:14px;color:#000;letter-spacing:-0.094px;left:631.5px;">Mr. Baggett</span>
<span class="t fc" style="top:515.4px;line-height:16px;font-size:14px;color:#000;left:494px;width:600px;text-align:center;">1</span>
<span class="t fc" style="top:515.4px;line-height:16px;font-size:14px;color:#000;letter-spacing:-0.056px;left:829.6px;">D-104</span>
<span class="t fc" style="top:515.4px;line-height:16px;font-size:14px;color:#000;letter-spacing:-1.516px;left:610px;width:600px;text-align:center;">11</span>
<span class="t fc" style="top:515.4px;line-height:16px;font-size:14px;color:#000;letter-spacing:-0.387px;left:941.3px;">1005</span>
<span class="t fc" style="top:515.4px;line-height:16px;font-size:14px;color:#000;letter-spacing:0.150px;left:1016.6px;">10 pt +/- (High)</span>
<span class="t fc" style="top:515.4px;line-height:16px;font-size:14px;color:#000;letter-spacing:-0.315px;left:1136.4px;">02A...</span>
<span class="t fc" style="top:515.4px;line-height:16px;font-size:14px;color:#000;left:1150px;width:600px;text-align:center;">4</span>
<span class="t fc" style="top:515.4px;line-height:16px;font-size:14px;color:#000;left:1199px;width:600px;text-align:center;">5</span>
<span class="t fc" style="top:515.4px;line-height:16px;font-size:14px;color:#000;letter-spacing:0.448px;left:1261px;width:600px;text-align:center;">Yes</span>
<span class="t fc" style="top:541.4px;line-height:16px;font-size:14px;color:#000;letter-spacing:-0.337px;left:-119.3px;width:600px;text-align:right;">4725</span>
<span class="t fc" style="top:541.4px;line-height:16px;font-size:14px;color:#000;left:491px;">DE Project Manag...</span>
<span class="t fc" style="top:541.4px;line-height:16px;font-size:14px;color:#000;letter-spacing:-0.094px;left:631.5px;">Mr. Baggett</span>
<span class="t fc" style="top:541.4px;line-height:16px;font-size:14px;color:#000;left:494px;width:600px;text-align:center;">1</span>
<span class="t fc" style="top:541.4px;line-height:16px;font-size:14px;color:#000;letter-spacing:0.087px;left:829.6px;">H-404</span>
<span class="t fc" style="top:541.4px;line-height:16px;font-size:14px;color:#000;letter-spacing:-0.151px;left:610px;width:600px;text-align:center;">Dua...</span>
<span class="t fc" style="top:541.4px;line-height:16px;font-size:14px;color:#000;letter-spacing:-0.387px;left:941.3px;">1094</span>
<span class="t fc" style="top:541.4px;line-height:16px;font-size:14px;color:#000;letter-spacing:0.150px;left:1016.6px;">10 pt +/- (High)</span>
<span class="t fc" style="top:541.4px;line-height:16px;font-size:14px;color:#000;left:1002px;width:600px;text-align:center;">1</span>
<span class="t fc" style="top:541.4px;line-height:16px;font-size:14px;color:#000;left:1150px;width:600px;text-align:center;">2</span>
<span class="t fc" style="top:541.4px;line-height:16px;font-size:14px;color:#000;left:1199px;width:600px;text-align:center;">5</span>
<span class="t fc" style="top:541.4px;line-height:16px;font-size:14px;color:#000;letter-spacing:0.448px;left:1261px;width:600px;text-align:center;">Yes</span>
<span class="t fc" style="top:567.4px;line-height:16px;font-size:14px;color:#000;letter-spacing:-0.337px;left:-119.3px;width:600px;text-align:right;">4755</span>
<span class="t fc" style="top:567.4px;line-height:16px;font-size:14px;color:#000;letter-spacing:-0.040px;left:491px;">Software Dev C++...</span>
<span class="t fc" style="top:567.4px;line-height:16px;font-size:14px;color:#000;letter-spacing:-0.094px;left:631.5px;">Mr. Baggett</span>
<span class="t fc" style="top:567.4px;line-height:16px;font-size:14px;color:#000;left:494px;width:600px;text-align:center;">1</span>
<span class="t fc" style="top:567.4px;line-height:16px;font-size:14px;color:#000;letter-spacing:0.087px;left:829.6px;">H-402</span>
<span class="t fc" style="top:567.4px;line-height:16px;font-size:14px;color:#000;letter-spacing:0.047px;left:610px;width:600px;text-align:center;">XC</span>
<span class="t fc" style="top:567.4px;line-height:16px;font-size:14px;color:#000;letter-spacing:-0.512px;left:941.3px;">1091</span>
<span class="t fc" style="top:567.4px;line-height:16px;font-size:14px;color:#000;letter-spacing:0.150px;left:1016.6px;">10 pt +/- (High)</span>
<span class="t fc" style="top:567.4px;line-height:16px;font-size:14px;color:#000;letter-spacing:-0.315px;left:1332.6px;">02A...</span>
<span class="t fc" style="top:567.4px;line-height:16px;font-size:14px;color:#000;left:1150px;width:600px;text-align:center;">4</span>
<span class="t fc" style="top:567.4px;line-height:16px;font-size:14px;color:#000;left:1199px;width:600px;text-align:center;">4</span>
<span class="t fc" style="top:567.4px;line-height:16px;font-size:14px;color:#000;letter-spacing:0.448px;left:1261px;width:600px;text-align:center;">Yes</span>
<div class="a" style="left:429px;top:797px;width:1194px;height:21px;background:#fcfcfc"></div>
<div class="a" style="left:453px;top:801px;width:735.5px;height:12px;background:#8b8b8b;border-radius:6px"></div>
<svg style="left:435px;top:800.5px" width="11" height="13" viewBox="0 0 11 13"><path d="M9.6 1.2 L9.6 11.8 L1.4 6.5 Z" fill="#8b8b8b" stroke="#8b8b8b" stroke-width="1.2" stroke-linejoin="round"/></svg>
<svg style="left:1605px;top:800.5px" width="11" height="13" viewBox="0 0 11 13"><path d="M1.4 1.2 L1.4 11.8 L9.6 6.5 Z" fill="#8b8b8b" stroke="#8b8b8b" stroke-width="1.2" stroke-linejoin="round"/></svg>
<div class="a" style="left:632px;top:431.5px;width:138.6px;height:137.6px;border-radius:50%;background:rgba(247,148,60,.5);border:7px solid #f7943c"></div>
</body></html>
